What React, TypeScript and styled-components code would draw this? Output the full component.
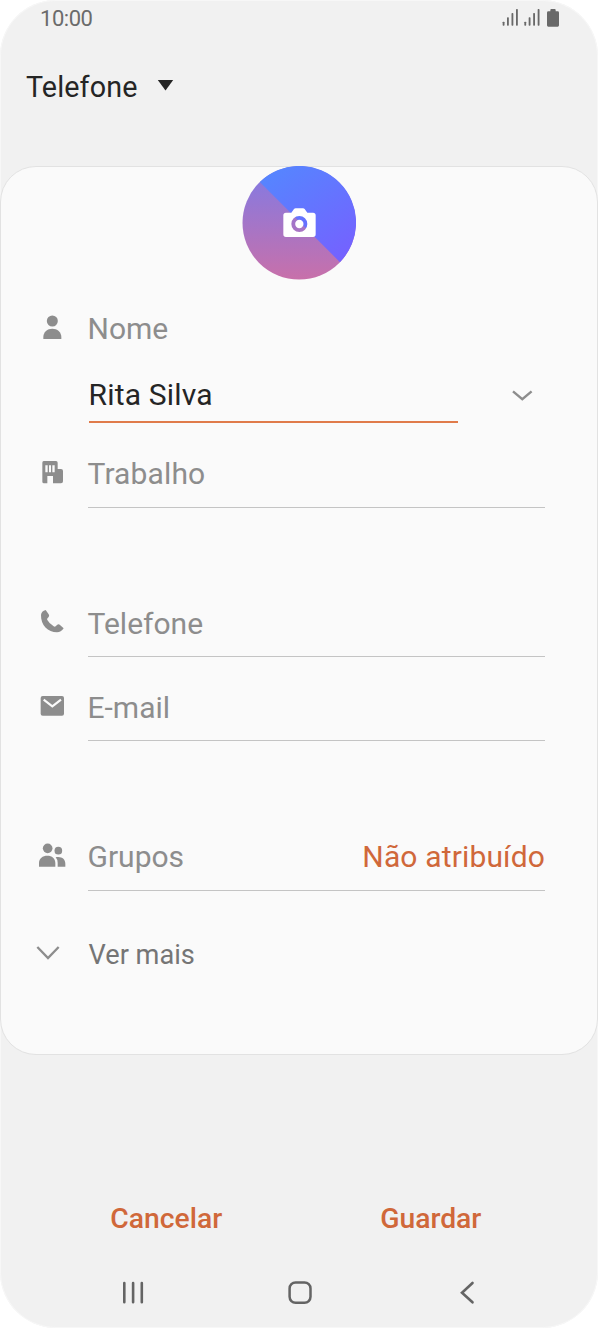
import React from "react";
import styled, { createGlobalStyle } from "styled-components";

const GREY = "#8d8d8d";
const ORANGE = "#d0683a";

const GlobalStyle = createGlobalStyle`
  * { box-sizing: border-box; }
  body { margin: 0; background: #fff; font-family: Roboto, sans-serif; }
  svg { display: block; flex: none; }
`;

const Screen = styled.main`
  width: 598px;
  height: 1328px;
  display: flex;
  flex-direction: column;
  background: #f1f1f1;
  border-radius: 56px;
  box-shadow: inset 0 0 0 1px #f7f7f7;
  overflow: hidden;
`;

const StatusBar = styled.header`
  height: 37px;
  padding: 0 38px 0 40px;
  display: flex;
  align-items: center;
  justify-content: space-between;
`;

const Clock = styled.time`
  font-size: 22px;
  line-height: 36px;
  letter-spacing: -0.45px;
  color: #6b6b6b;
`;

const StorageSelect = styled.button`
  height: 129px;
  padding: 30px 25px 0 26px;
  display: flex;
  align-items: flex-start;
  gap: 20px;
  border: 0;
  background: none;
  font: 400 28.7px/40px Roboto, sans-serif;
  letter-spacing: 0.12px;
  color: #252525;
`;

const Card = styled.section`
  height: 889px;
  border: 1px solid #e2e2e2;
  border-radius: 36px;
  background: #fafafa;
  display: flex;
  flex-direction: column;
`;

const AvatarButton = styled.button`
  align-self: center;
  width: 114px;
  height: 114px;
  margin-top: -1px;
  padding: 0;
  border: 0;
  background: none;
`;

const Row = styled.div<{ $gap: number }>`
  margin-top: ${(p) => p.$gap}px;
  padding: 0 52px 0 35px;
  display: flex;
  align-items: flex-start;
`;

const Field = styled.div<{ $line?: boolean }>`
  flex: 1;
  height: ${(p) => (p.$line ? 53 : 40)}px;
  margin-left: 19.5px;
  display: flex;
  justify-content: space-between;
  border-bottom: ${(p) => (p.$line ? "1px solid #c4c4c4" : "0")};
`;

const Label = styled.span<{ $spacing?: number; $raised?: boolean }>`
  font-size: 30px;
  line-height: ${(p) => (p.$raised ? 38 : 40)}px;
  letter-spacing: ${(p) => p.$spacing ?? 0}px;
  color: ${GREY};
`;

const GroupValue = styled(Label)`
  color: ${ORANGE};
`;

const NameRow = styled.div`
  margin-top: 25px;
  padding: 0 64px 0 87.5px;
  display: flex;
  justify-content: space-between;
`;

const NameValue = styled.div`
  width: 369.5px;
  height: 48px;
  border-bottom: 2px solid #e07b4a;
  font-size: 30px;
  line-height: 40px;
  letter-spacing: 0.18px;
  color: #252525;
`;

const MoreLabel = styled(Label)`
  font-size: 27.2px;
  padding-left: 1px;
  color: #757575;
`;

const Actions = styled.div`
  margin-top: 144px;
  padding: 0 35px 0 34px;
  display: grid;
  grid-template-columns: 1fr 1fr;
`;

const Action = styled.button`
  height: 40px;
  padding: 0;
  border: 0;
  background: none;
  font: 500 28.3px/40px Roboto, sans-serif;
  color: ${ORANGE};
`;

const NavBar = styled.nav`
  margin-top: 40px;
  padding: 0 47px 0 49px;
  display: grid;
  grid-template-columns: repeat(3, 1fr);
  justify-items: center;
`;

const RowIcon = ({ top, children }: { top: number; children: React.ReactNode }) => (
  <svg width="32" height="40" viewBox={`48 ${top} 96 120`} fill={GREY}>{children}</svg>
);

const Chevron = () => (
  <svg width="22" height="40" viewBox="0 0 22 40" fill="none" stroke={GREY} strokeWidth="2.4">
    <path d="M2 16.3 11.3 24.1 20.6 16.3" />
  </svg>
);

const StatusIcons = () => (
  <svg width="60" height="20" viewBox="180 26 180 60" fill="#696969">
    {[188, 253].map((x) => (
      <g key={x}>
        <rect x={x} y="64" width="5.5" height="12" rx="2" />
        <rect x={x + 13} y="51" width="5.5" height="25" rx="2" />
        <rect x={x + 26.5} y="38" width="5.5" height="38" rx="2" />
        <rect x={x + 40} y="26" width="5.5" height="50" rx="2" />
      </g>
    ))}
    <path d="M331 33v-4q0-3 3-3h10q3 0 3 3v4h6q4 0 4 4v38q0 4-4 4h-28q-4 0-4-4v-38q0-4 4-4z" />
  </svg>
);

const Avatar = () => (
  <svg width="114" height="114" viewBox="36 33 342 342">
    <defs>
      <linearGradient id="blue" x1="120" y1="40" x2="320" y2="320" gradientUnits="userSpaceOnUse">
        <stop stopColor="#5586ff" />
        <stop offset="1" stopColor="#7462ff" />
      </linearGradient>
      <linearGradient id="pink" x1="0" y1="80" x2="0" y2="374" gradientUnits="userSpaceOnUse">
        <stop stopColor="#8979de" />
        <stop offset="1" stopColor="#c870aa" />
      </linearGradient>
    </defs>
    <circle cx="207.5" cy="203.5" r="170" fill="url(#pink)" />
    <path d="M89.5 81.1A170 170 0 0 1 329.9 321.5Z" fill="url(#blue)" />
    <path
      fill="#fff"
      fillRule="evenodd"
      d="M168 173h16l8-11q2-2 5-2h22q3 0 5 2l8 11h17q8 0 8 8v57q0 8-8 8h-81q-8 0-8-8v-57q0-8 8-8ZM208 183a24 24 0 1 0 0 48a24 24 0 1 0 0-48Z"
    />
    <circle cx="208" cy="207" r="12.5" fill="#fff" />
  </svg>
);

export default function App() {
  return (
    <>
      <GlobalStyle />
      <Screen>
        <StatusBar>
          <Clock>10:00</Clock>
          <StatusIcons />
        </StatusBar>
        <StorageSelect>
          Telefone
          <svg width="17" height="40" viewBox="0 0 17 40" fill="#252525">
            <path d="M.8 13h15.4L8.5 23.6Z" />
          </svg>
        </StorageSelect>
        <Card>
          <AvatarButton aria-label="Foto"><Avatar /></AvatarButton>
          <Row $gap={30}>
            <RowIcon top={30}>
              <circle cx="97" cy="63" r="16.5" />
              <path d="M70 117v-6c0-15 12-25 27-25s27 10 27 25v6Z" />
            </RowIcon>
            <Field><Label $raised>Nome</Label></Field>
          </Row>
          <NameRow>
            <NameValue>Rita Silva</NameValue>
            <Chevron />
          </NameRow>
          <Row $gap={32}>
            <RowIcon top={465}>
              <path
                fillRule="evenodd"
                d="M71 483h37q5 0 5 5v19h10q6 0 6 6v31q0 6-6 6h-24v-22h-17v22h-10q-5 0-5-5v-57q0-5 4-5ZM76 496v21h7v-21ZM87 496v21h6v-21ZM97 496v21h7v-21Z"
              />
            </RowIcon>
            <Field $line><Label $raised $spacing={0.12}>Trabalho</Label></Field>
          </Row>
          <Row $gap={96}>
            <RowIcon top={42}>
              <path d="M77 60Q64 63 63 75C62 105 84 127 111 127Q123 127 131 115L120 105Q116 101 111 105L107 109Q104 111 101 109Q88 101 82 90Q80 87 83 84L86 81Q89 77 86 73Z" />
            </RowIcon>
            <Field $line><Label>Telefone</Label></Field>
          </Row>
          <Row $gap={31}>
            <RowIcon top={294}>
              <rect x="62" y="318" width="70" height="59" rx="6" />
              <path d="M71 329 97 349 123 329" fill="none" stroke="#fafafa" strokeWidth="6.5" />
            </RowIcon>
            <Field $line><Label>E-mail</Label></Field>
          </Row>
          <Row $gap={97}>
            <RowIcon top={24}>
              <circle cx="83" cy="55" r="14.5" />
              <circle cx="115" cy="62" r="11.5" />
              <path d="M57 110V99C57 85 68 77 82 77S106 85 106 99v11ZM113 110V98Q113 89 107 82C124 78 136 87 136 101v9Z" />
            </RowIcon>
            <Field $line>
              <Label $raised>Grupos</Label>
              <GroupValue $raised $spacing={0.15}>Não atribuído</GroupValue>
            </Field>
          </Row>
          <Row $gap={44}>
            <RowIcon top={315}>
              <path d="M52 351 84 384 116 351" fill="none" stroke={GREY} strokeWidth="7" />
            </RowIcon>
            <Field><MoreLabel>Ver mais</MoreLabel></Field>
          </Row>
        </Card>
        <Actions>
          <Action>Cancelar</Action>
          <Action>Guardar</Action>
        </Actions>
        <NavBar>
          <svg width="26" height="28" viewBox="0 0 26 28" stroke="#646464" strokeWidth="2.6" strokeLinecap="round">
            <path d="M4.3 4v19.3M13.1 4v19.3M21.8 4v19.3" />
          </svg>
          <svg width="26" height="28" viewBox="0 0 26 28" fill="none" stroke="#646464" strokeWidth="2.5">
            <rect x="2.6" y="3.4" width="20.9" height="20.4" rx="6" />
          </svg>
          <svg width="26" height="28" viewBox="0 0 26 28" fill="none" stroke="#646464" strokeWidth="2.6" strokeLinecap="round">
            <path d="M18.5 4 8 13.7 18.5 23.3" />
          </svg>
        </NavBar>
      </Screen>
    </>
  );
}
